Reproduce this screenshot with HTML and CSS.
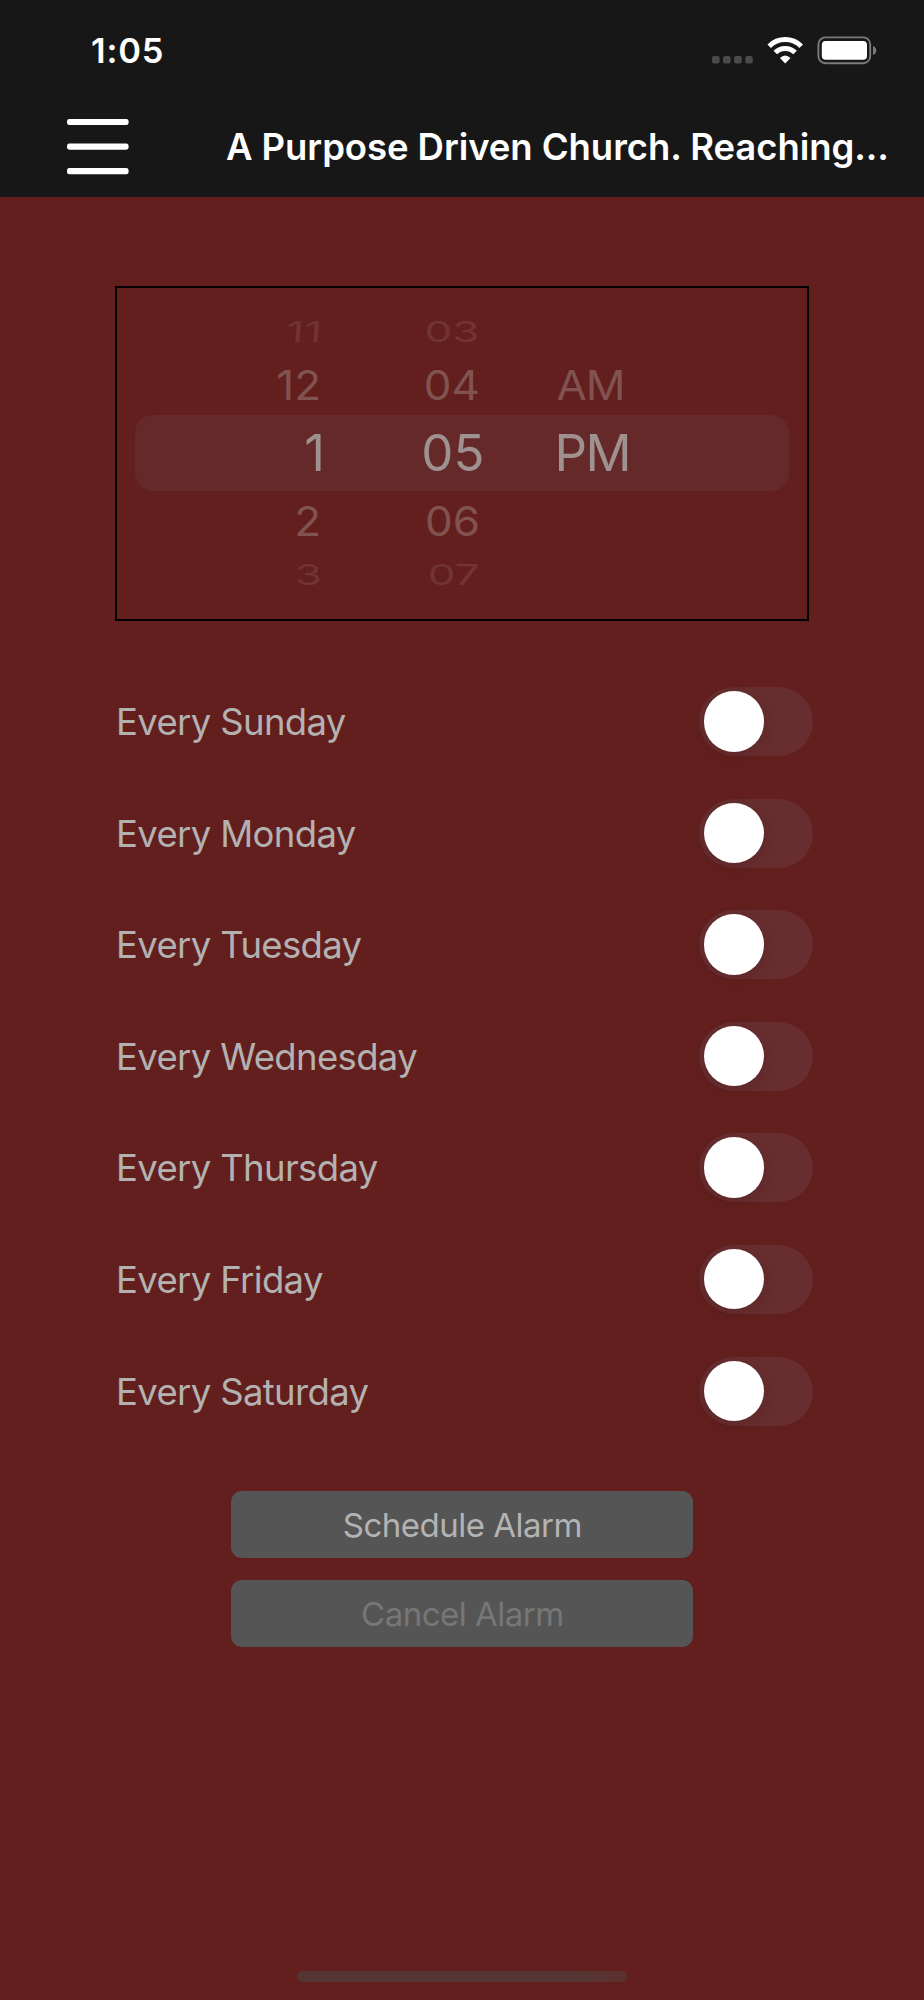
FILE: index.html
```html
<!DOCTYPE html>
<html lang="en">
<head>
<meta charset="utf-8">
<title>Alarm</title>
<link rel="stylesheet" href="styles.css">
</head>
<body>
<div class="screen">
  <header class="header">
    <div class="status">
      <span class="time">1:05</span>
      <svg class="status-icons" width="166" height="30" viewBox="711 35 166 30">
        <g fill="#4b4b4b">
          <rect x="712" y="56" width="7.6" height="7.6" rx="2"/>
          <rect x="723" y="56" width="7.6" height="7.6" rx="2"/>
          <rect x="734.1" y="56" width="7.6" height="7.6" rx="2"/>
          <rect x="745.2" y="56" width="7.6" height="7.6" rx="2"/>
        </g>
        <g fill="none" stroke="#fff" stroke-width="5">
          <path d="M769.2 46.2A22.7 22.7 0 0 1 801.2 46.2"/>
          <path d="M775.3 52.6A14 14 0 0 1 795.1 52.6"/>
        </g>
        <path d="M785.2 63.4L779.9 58.1Q785.2 52.9 790.5 58.1Z" fill="#fff"/>
        <rect x="818.4" y="37.4" width="51.8" height="25.8" rx="7" fill="none" stroke="#7b7b7b" stroke-width="1.9"/>
        <rect x="821.8" y="40.9" width="45.2" height="18.9" rx="3.8" fill="#fff"/>
        <path d="M873 45.9Q876.3 47.2 876.3 50.4T873 55Z" fill="#7b7b7b"/>
      </svg>
    </div>
    <div class="navbar">
      <svg class="menu" width="62" height="57" viewBox="0 0 62 57" fill="#fff">
        <rect x="0" y="0.9" width="61.6" height="6.2" rx="2.4"/>
        <rect x="0" y="25.5" width="61.6" height="6.2" rx="2.4"/>
        <rect x="0" y="50.1" width="61.6" height="6.2" rx="2.4"/>
      </svg>
      <h1 class="title">A Purpose Driven Church. Reaching...</h1>
    </div>
  </header>
  <main class="content">
    <section class="picker">
      <div class="row far above"><span class="hour">11</span><span class="minute">03</span><span></span></div>
      <div class="row near above"><span class="hour">12</span><span class="minute">04</span><span class="period">AM</span></div>
      <div class="row current"><span class="hour">1</span><span class="minute">05</span><span class="period">PM</span></div>
      <div class="row near"><span class="hour">2</span><span class="minute">06</span><span></span></div>
      <div class="row far below"><span class="hour">3</span><span class="minute">07</span><span></span></div>
    </section>
    <section class="days">
      <div class="day"><span class="label">Every Sunday</span><span class="switch"><i class="knob"></i></span></div>
      <div class="day"><span class="label">Every Monday</span><span class="switch"><i class="knob"></i></span></div>
      <div class="day"><span class="label">Every Tuesday</span><span class="switch"><i class="knob"></i></span></div>
      <div class="day"><span class="label">Every Wednesday</span><span class="switch"><i class="knob"></i></span></div>
      <div class="day"><span class="label">Every Thursday</span><span class="switch"><i class="knob"></i></span></div>
      <div class="day"><span class="label">Every Friday</span><span class="switch"><i class="knob"></i></span></div>
      <div class="day"><span class="label">Every Saturday</span><span class="switch"><i class="knob"></i></span></div>
    </section>
    <section class="actions">
      <button class="button schedule">Schedule Alarm</button>
      <button class="button cancel" disabled>Cancel Alarm</button>
    </section>
  </main>
  <div class="home"></div>
</div>
</body>
</html>
```
FILE: styles.css
```css
* { box-sizing: border-box; }
body { margin: 0; background: #621f1e; font-family: Inter, "Liberation Sans", sans-serif; }
.screen { width: 924px; height: 2000px; display: flex; flex-direction: column; overflow: hidden; background: #621f1e; }
.header { height: 197px; flex: none; background: #171717; color: #fff; }
.status { height: 100px; display: flex; align-items: flex-start; justify-content: space-between; padding: 35px 47px 0 91px; }
.time { font-size: 34.5px; line-height: 32px; font-weight: 600; letter-spacing: 0.8px; }
.navbar { display: flex; align-items: flex-start; padding: 18px 0 0 67px; }
.title { margin: 6px 0 0 97px; font-size: 36.5px; line-height: 46px; font-weight: 600; letter-spacing: -0.07px; white-space: nowrap; }
.content { flex: 1; padding: 89px 111px 0 115px; }

.picker { width: 694px; height: 335px; border: 2px solid #000; padding: 21px 18px 0; }
.row { display: grid; grid-template-columns: 187px 159px 1fr; width: 653.5px; color: #9f9190; font-size: 51px; }
.row span { display: block; white-space: nowrap; }
.hour { text-align: right; }
.minute { text-align: right; }
.period { padding-left: 73px; }
.current { grid-template-columns: 190px 159.5px 1fr; height: 76px; line-height: 75px; border-radius: 18px; background: #652929; }
.current .period { padding-left: 70px; letter-spacing: -1.5px; }
.near { grid-template-columns: 186px 159px 1fr; height: 60px; line-height: 60px; font-size: 44px; color: #815250; }
.near span { transform: scaleY(.94); }
.near .period { padding-left: 76.5px; letter-spacing: -1px; }
.far { grid-template-columns: 187px 157.5px 1fr; height: 46px; line-height: 46px; font-size: 44px; color: #713333; }
.far span { transform: scaleY(.65); }
.far.above .hour { transform: scaleY(.65) skewX(-3deg); }
.far.below { margin-top: 0.5px; }

.days { padding-top: 66px; }
.day { height: 111.6px; display: flex; align-items: flex-start; justify-content: space-between; }
.label { padding: 12px 0 0 1px; font-size: 36.5px; line-height: 46px; color: #b4b1b1; letter-spacing: -0.65px; white-space: nowrap; }
.switch { width: 114px; height: 69px; border-radius: 35px; background: #672d2f; padding: 4px 4.5px; }
.knob { display: block; width: 60.5px; height: 60.5px; border-radius: 50%; background: #fff; box-shadow: 0 4px 14px rgba(40, 0, 0, .13); }

.actions { width: 462px; margin: 23px 0 0 116.4px; display: grid; gap: 22.3px; }
.button { height: 67px; padding: 0; border: 0; border-radius: 11px; background: #555; font-family: inherit; font-size: 33px; line-height: 66px; letter-spacing: -0.5px; color: #b3b3b3; }
.button.cancel { color: #777; }
.home { width: 330px; height: 11px; margin: 0 auto 18px; border-radius: 6px; background: linear-gradient(90deg, #533634 0 82%, #5d302f); }
```
